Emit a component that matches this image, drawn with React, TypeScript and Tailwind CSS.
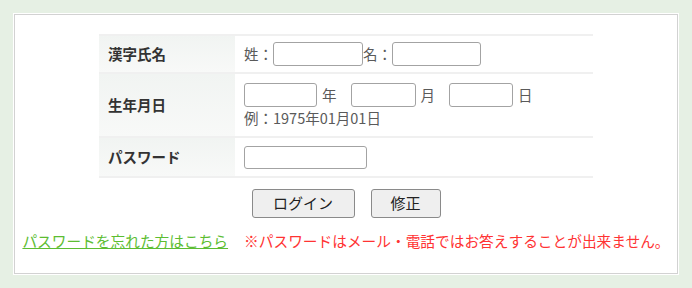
const font = { fontFamily: '"Noto Sans CJK JP", "Noto Sans", sans-serif' };

function Field({ className }: { className: string }) {
  return (
    <input
      type="text"
      className={`h-[24px] rounded-[3px] border border-[#a3a3a3] bg-white ${className}`}
    />
  );
}

function Row({
  label,
  height,
  children,
}: {
  label: string;
  height: string;
  children: React.ReactNode;
}) {
  return (
    <div className={`flex border-b-2 border-[#f0f0f0] ${height}`}>
      <div className="flex w-[136px] items-center bg-gradient-to-b from-[#f1f4f2] to-[#f8f9f8] pl-[9px] text-[14.5px] font-bold text-[#333]">
        {label}
      </div>
      <div className="flex flex-1 flex-col justify-center pl-[9px] text-[14.5px] text-[#5a5a5a]">
        {children}
      </div>
    </div>
  );
}

export default function App() {
  return (
    <div className="h-[288px] w-[692px] bg-[#e6f0e4] p-[14px]" style={font}>
      <div className="h-[260px] border border-[#d2d2d2] bg-white pt-[19px] shadow-[0_0_0_1px_#ffffff]">
        <div className="mx-auto w-[494px] border-t-2 border-[#f0f0f0]">
          <Row label="漢字氏名" height="h-[38px]">
            <div className="flex items-center">
              <span>姓：</span>
              <Field className="w-[90px]" />
              <span>名：</span>
              <Field className="w-[89px]" />
            </div>
          </Row>
          <Row label="生年月日" height="h-[64px]">
            <div className="flex items-center">
              <Field className="w-[73px]" />
              <span className="ml-[5px] mr-[14px]">年</span>
              <Field className="w-[65px]" />
              <span className="ml-[5px] mr-[14px]">月</span>
              <Field className="w-[64px]" />
              <span className="ml-[5px]">日</span>
            </div>
            <div className="mt-[2px] leading-[18px]">例：1975年01月01日</div>
          </Row>
          <Row label="パスワード" height="h-[40px]">
            <input
              type="password"
              className="h-[23px] w-[123px] rounded-[3px] border border-[#a3a3a3] bg-white"
            />
          </Row>
        </div>

        <div className="mt-[11px] flex justify-center gap-[16px]">
          <button
            type="button"
            className="h-[29px] w-[103px] rounded-[3px] border border-[#8a8a8a] bg-[#efefef] text-[15px] text-[#222]"
          >
            ログイン
          </button>
          <button
            type="button"
            className="h-[29px] w-[70px] rounded-[3px] border border-[#8a8a8a] bg-[#efefef] text-[15px] text-[#222]"
          >
            修正
          </button>
        </div>

        <div className="mt-[13px] flex justify-center gap-[16px] text-[14.7px] leading-[20px]">
          <a href="#" className="text-[#5cbd32] underline">
            パスワードを忘れた方はこちら
          </a>
          <span className="text-[#ff3333]">
            ※パスワードはメール・電話ではお答えすることが出来ません。
          </span>
        </div>
      </div>
    </div>
  );
}
